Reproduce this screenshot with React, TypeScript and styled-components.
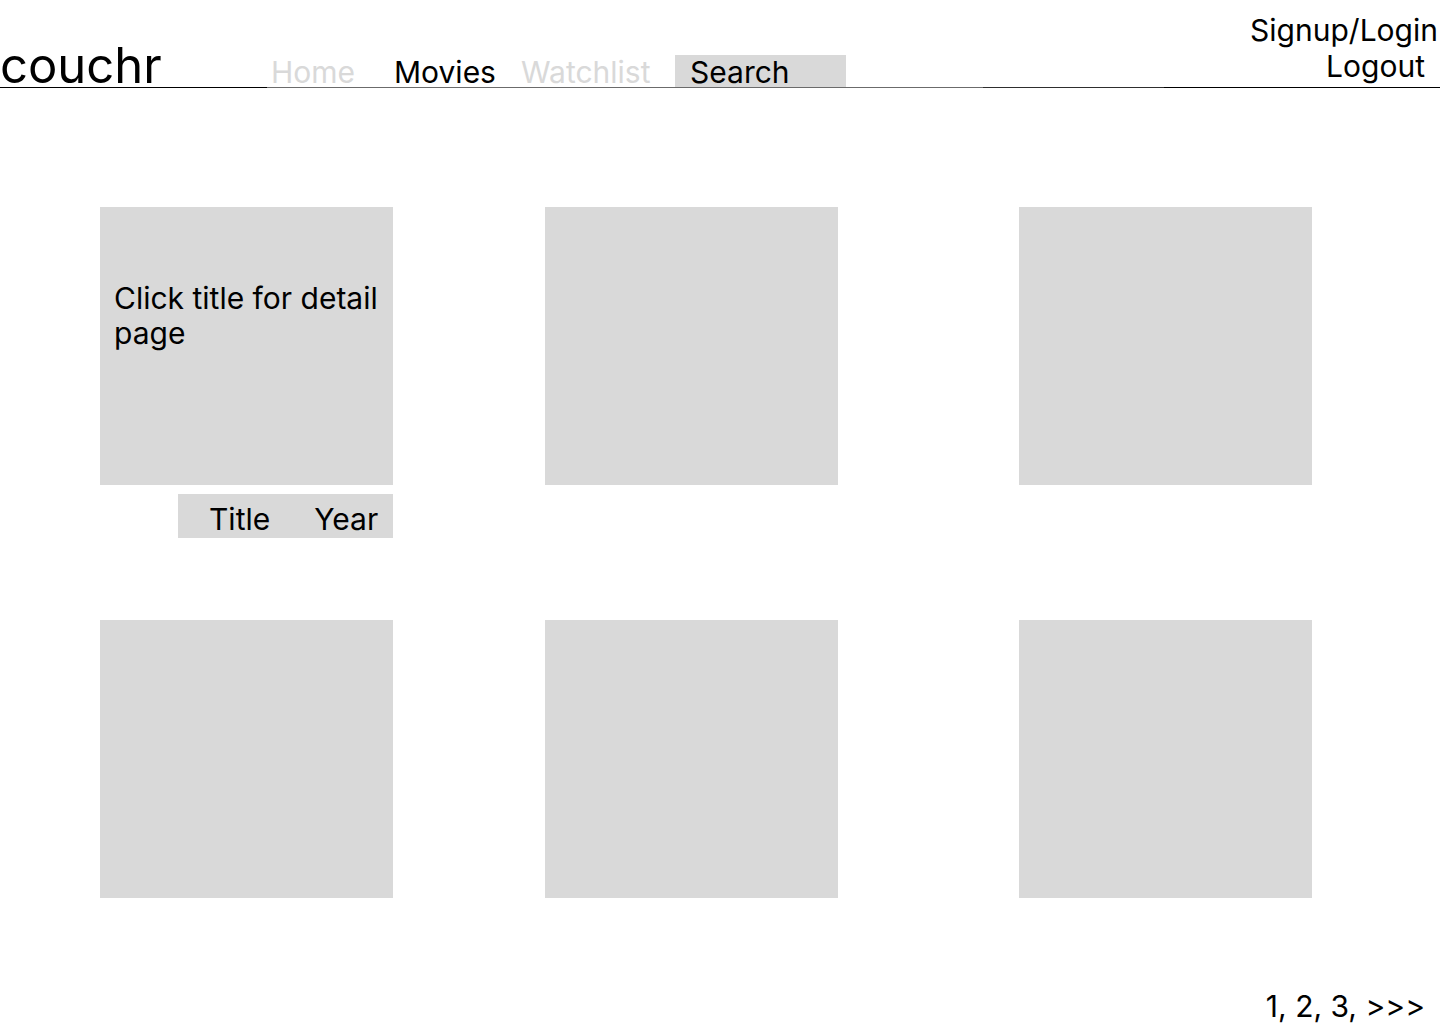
import React from "react";
import styled, { createGlobalStyle } from "styled-components";

const Global = createGlobalStyle`
  html, body { margin: 0; padding: 0; background: #ffffff; }
  body { font-family: Inter, "Noto Sans", "Liberation Sans", sans-serif; color: #000; overflow: hidden; }
  * { box-sizing: border-box; }
`;

const Page = styled.div`
  width: 1440px;
  height: 1024px;
  display: flex;
  flex-direction: column;
`;

const Header = styled.header`
  height: 89px;
  display: flex;
  align-items: flex-end;
  border-bottom: 1px solid #000;
  border-image: linear-gradient(
      to right,
      #000 0,
      #000 268px,
      #6b6b6b 268px,
      #6b6b6b 983px,
      #2e2e2e 983px,
      #2e2e2e 1163px,
      #000 1163px
    )
    1;
`;

const Logo = styled.div`
  font-size: 49px;
  line-height: 42px;
  width: 271px;
`;

const Nav = styled.nav`
  display: flex;
  align-items: flex-end;
`;

const NavItem = styled.a<{ $w: number; $muted?: boolean }>`
  width: ${(p) => p.$w}px;
  font-size: 30px;
  line-height: 30px;
  color: ${(p) => (p.$muted ? "#d9d9d9" : "#000")};
  text-decoration: none;
`;

const SearchBox = styled.div`
  width: 171px;
  height: 32px;
  background: #d9d9d9;
  padding: 2px 0 0 15px;
  font-size: 30px;
  line-height: 30px;
`;

const Account = styled.div`
  margin-left: auto;
  align-self: flex-start;
  padding-top: 12px;
  padding-right: 2px;
  display: flex;
  flex-direction: column;
  align-items: flex-end;
  font-size: 30px;
  line-height: 36px;
`;

const AccountLink = styled.span<{ $pr?: number }>`
  padding-right: ${(p) => p.$pr ?? 0}px;
`;

const Main = styled.main`
  padding: 119px 0 0 100px;
  display: grid;
  grid-template-columns: 445px 474px 293px;
  grid-template-rows: 331px 278px;
  row-gap: 82px;
`;

const Cell = styled.div`
  display: flex;
  flex-direction: column;
  gap: 9px;
`;

const Poster = styled.div`
  width: 293px;
  height: 278px;
  background: #d9d9d9;
  padding: 74px 8px 0 14px;
  font-size: 30px;
  line-height: 35px;
`;

const Meta = styled.div`
  margin-left: 78px;
  width: 215px;
  height: 44px;
  background: #d9d9d9;
  padding: 6px 0 0 31px;
  display: flex;
  gap: 44px;
  font-size: 30px;
  line-height: 38px;
`;

const Pagination = styled.div`
  margin-top: 90px;
  align-self: flex-end;
  padding-right: 15px;
  font-size: 30px;
  line-height: 36px;
`;

export default function App() {
  return (
    <Page>
      <Global />
      <Header>
        <Logo>couchr</Logo>
        <Nav>
          <NavItem $w={123} $muted>Home</NavItem>
          <NavItem $w={127}>Movies</NavItem>
          <NavItem $w={154} $muted>Watchlist</NavItem>
          <SearchBox>Search</SearchBox>
        </Nav>
        <Account>
          <AccountLink>Signup/Login</AccountLink>
          <AccountLink $pr={13}>Logout</AccountLink>
        </Account>
      </Header>
      <Main>
        <Cell>
          <Poster>Click title for detail page</Poster>
          <Meta>
            <span>Title</span>
            <span>Year</span>
          </Meta>
        </Cell>
        <Cell>
          <Poster />
        </Cell>
        <Cell>
          <Poster />
        </Cell>
        <Cell>
          <Poster />
        </Cell>
        <Cell>
          <Poster />
        </Cell>
        <Cell>
          <Poster />
        </Cell>
      </Main>
      <Pagination>1, 2, 3, &gt;&gt;&gt;</Pagination>
    </Page>
  );
}
